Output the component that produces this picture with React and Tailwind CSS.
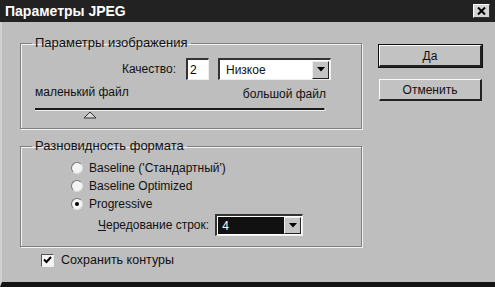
import React from "react";

const font = { fontFamily: '"Liberation Sans", Arial, sans-serif' };

function Arrow() {
  return (
    <svg width="8" height="5" viewBox="0 0 8 5">
      <polygon points="0,0 8,0 4,4.5" fill="#000" />
    </svg>
  );
}

function ArrowBtn() {
  return (
    <div className="w-[17px] h-full flex items-center justify-center bg-[#c4c4c4] border-t border-l border-t-[#eee] border-l-[#eee] border-r border-b border-r-[#222] border-b-[#222]">
      <Arrow />
    </div>
  );
}

function Radio({ checked, label }) {
  return (
    <div className="flex items-center h-[18px]">
      <div className="w-[12px] h-[12px] rounded-full bg-[#f4f4f4] border border-[#777] border-b-[#ddd] border-r-[#ddd] flex items-center justify-center">
        {checked && <div className="w-[4px] h-[4px] rounded-full bg-black" />}
      </div>
      <span className="ml-[6px] text-[12px] text-[#111]">{label}</span>
    </div>
  );
}

function Btn({ children, def }) {
  return (
    <div
      className={
        "h-[22px] w-[103px] flex items-center justify-center text-[12px] text-[#111] bg-[#c2c2c2] border-t border-l border-t-[#fafafa] border-l-[#fafafa] border-r-2 border-b-2 border-r-[#222] border-b-[#222] " +
        (def ? "outline outline-1 outline-[#111]" : "")
      }
    >
      {children}
    </div>
  );
}

export default function App() {
  return (
    <div
      className="w-[495px] h-[287px] bg-[#bebebe] flex flex-col overflow-hidden select-none"
      style={font}
    >
      {/* Title bar */}
      <div className="h-[22px] bg-[#222] flex items-center justify-between pl-[5px] pr-[5px] shrink-0">
        <span className="text-white font-bold text-[14px] leading-none">
          Параметры JPEG
        </span>
        <div className="w-[17px] h-[14px] bg-[#d4d4d4] border-t border-l border-t-white border-l-white border-r border-b border-r-[#333] border-b-[#333] flex items-center justify-center">
          <svg width="9" height="8" viewBox="0 0 9 8">
            <path d="M1 0.5 L8 7.5 M8 0.5 L1 7.5" stroke="#000" strokeWidth="2" />
          </svg>
        </div>
      </div>

      {/* Body */}
      <div className="flex-1 flex border-b-[5px] border-b-[#151515] border-l-2 border-l-[#d0d0d0]">
        {/* Left column */}
        <div className="w-[360px] pl-[18px] pt-[14px] flex flex-col">
          {/* Group 1 */}
          <fieldset className="border border-[#808080] shadow-[1px_1px_0_#f2f2f2,inset_1px_1px_0_#f2f2f2] pl-[14px] pr-[30px] pb-[8px]">
            <legend className="ml-[-3px] px-[3px] text-[13px] leading-[14px] text-[#111]">
              Параметры изображения
            </legend>
            <div className="mt-[8px] flex items-center justify-end h-[22px]">
              <span className="text-[12px] text-[#111] mr-[10px]">Качество:</span>
              <div className="w-[23px] h-[22px] bg-white border-t-2 border-l-2 border-t-[#333] border-l-[#333] border-b border-r border-b-[#eee] border-r-[#eee] flex items-center pl-[2px] text-[12px] text-black">
                2
              </div>
              <div className="ml-[9px] w-[113px] h-[22px] bg-white border-t-2 border-l-2 border-t-[#333] border-l-[#333] border-b border-r border-b-[#eee] border-r-[#eee] flex items-center justify-between">
                <span className="pl-[6px] text-[12px] text-[#111]">Низкое</span>
                <div className="h-[18px] mr-[1px]">
                  <ArrowBtn />
                </div>
              </div>
            </div>
            <div className="mt-[3px] flex justify-between items-end pr-[5px] h-[16px]">
              <span className="text-[12px] text-[#111] leading-[14px]">маленький файл</span>
              <span className="text-[12px] text-[#111] leading-[14px] translate-y-[2px]">большой файл</span>
            </div>
            <div className="mt-[9px] pr-[5px]">
              <svg width="291" height="12" viewBox="0 0 291 12" className="block">
                <line x1="0" y1="1" x2="290" y2="1" stroke="#1a1a1a" strokeWidth="2" />
                <line x1="0" y1="2.5" x2="290" y2="2.5" stroke="#f0f0f0" strokeWidth="1" />
                <line x1="290" y1="-1" x2="290" y2="3" stroke="#eee" strokeWidth="1" />
                <polygon points="55,4 49,10 61,10" fill="#d8d8d8" stroke="#333" strokeWidth="1" />
              </svg>
            </div>
          </fieldset>

          {/* Group 2 */}
          <fieldset className="mt-[10px] border border-[#808080] shadow-[1px_1px_0_#f2f2f2,inset_1px_1px_0_#f2f2f2] pl-[50px] pb-[10px]">
            <legend className="ml-[-39px] px-[3px] text-[13px] leading-[14px] text-[#111]">
              Разновидность формата
            </legend>
            <div className="mt-[6px] flex flex-col">
              <Radio label="Baseline ('Стандартный')" />
              <Radio label="Baseline Optimized" />
              <Radio checked label="Progressive" />
              <div className="mt-[1px] h-[22px] flex items-center pl-[27px]">
                <span className="text-[12px] text-[#111]">
                  <span className="underline">Ч</span>ередование строк:
                </span>
                <div className="ml-[6px] w-[88px] h-[22px] bg-white border-t-2 border-l-2 border-t-[#333] border-l-[#333] border-b border-r border-b-[#eee] border-r-[#eee] flex items-center justify-between p-[1px]">
                  <div className="flex-1 h-full bg-[#111] flex items-center pl-[4px] text-white text-[12px]">
                    4
                  </div>
                  <div className="h-full">
                    <ArrowBtn />
                  </div>
                </div>
              </div>
            </div>
          </fieldset>

          {/* Checkbox */}
          <div className="mt-[6px] ml-[21px] flex items-center h-[14px]">
            <div className="w-[13px] h-[13px] bg-[#f4f4f4] border-t border-l border-t-[#555] border-l-[#555] border-r border-b border-r-[#eee] border-b-[#eee] flex items-center justify-center">
              <svg width="9" height="8" viewBox="0 0 9 8">
                <path d="M1 3.5 L3.5 6 L8 1" stroke="#000" strokeWidth="2" fill="none" />
              </svg>
            </div>
            <span className="ml-[7px] text-[12.5px] text-[#111]">Сохранить контуры</span>
          </div>
        </div>

        {/* Right column */}
        <div className="ml-[17px] pt-[23px] flex flex-col gap-[12px]">
          <Btn def>Да</Btn>
          <Btn>Отменить</Btn>
        </div>
      </div>
    </div>
  );
}
